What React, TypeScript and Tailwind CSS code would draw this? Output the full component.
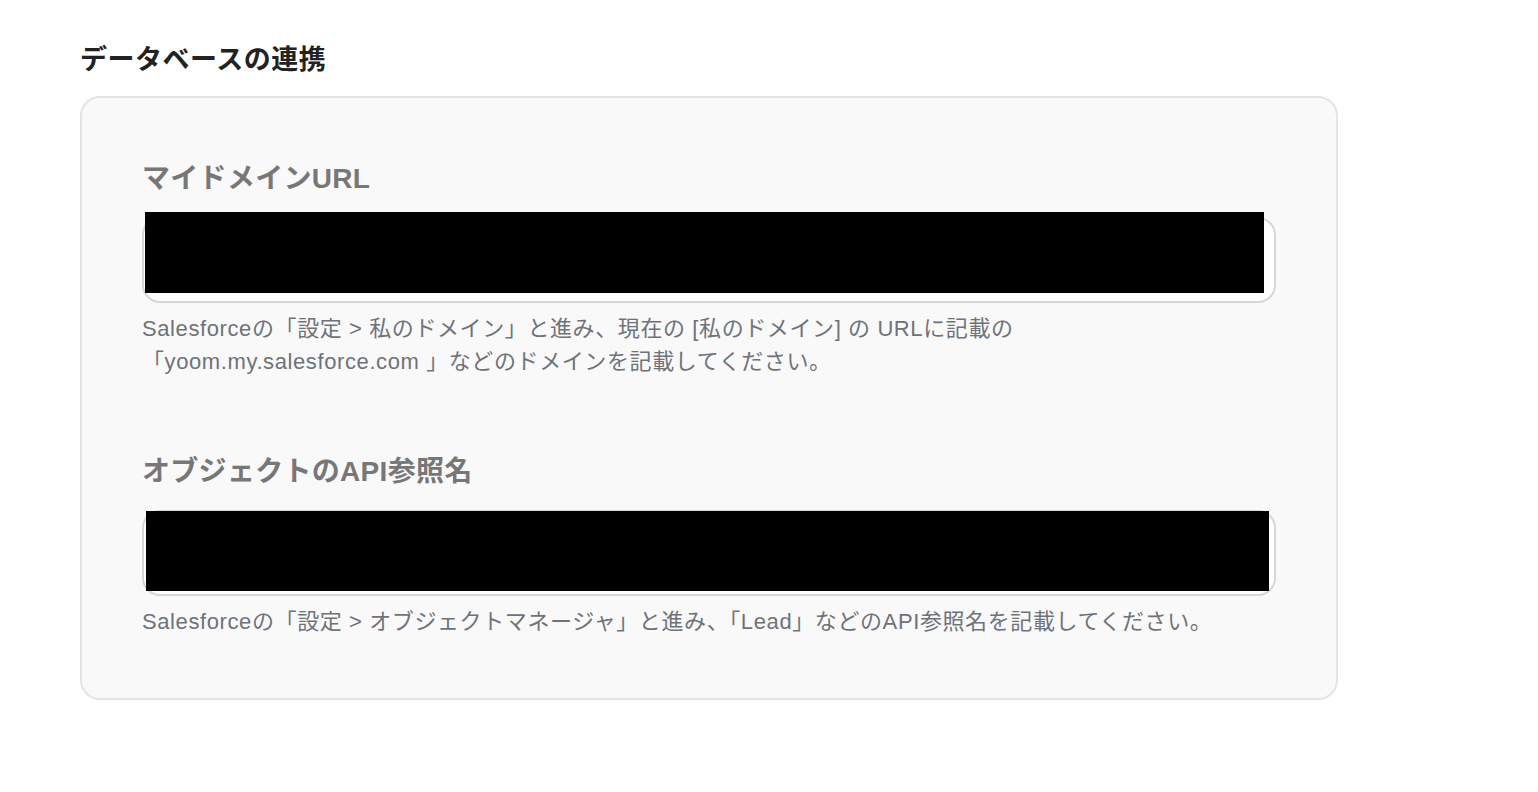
const latinJa = "font-['Liberation_Sans','Noto_Sans_CJK_JP',sans-serif]";

type FieldProps = {
  label: string;
  mask: string;
  help: React.ReactNode;
};

const Field = ({ label, mask, help }: FieldProps) => (
  <div className="flex flex-col">
    <h3 className="text-[28px] leading-[40px] font-bold text-[#777777] tracking-[0.3px]">{label}</h3>
    <div className="relative mt-[18px] h-[86px] rounded-[18px] border-2 border-[#d3d7dc] bg-white">
      {/* redaction block over the value */}
      <div className={`absolute bg-black ${mask}`}></div>
    </div>
    <p className="mt-[9px] text-[22px] leading-[33px] text-[#6e737a] tracking-[0.6px]">{help}</p>
  </div>
);

export default function App() {
  return (
    <div className={`min-h-screen bg-white pl-[80px] pt-[40px] ${latinJa}`}>
      <h2 className="text-[27px] leading-[40px] font-bold text-[#222222] tracking-[0.5px]">データベースの連携</h2>
      <div className="mt-[16px] w-[1258px] rounded-[20px] border-2 border-[#e1e4e8] bg-[#f9f9f9] px-[60px] pt-[61px] pb-[60px]">
        <Field
          label="マイドメインURL"
          mask="left-[1px] top-[-7px] w-[1119px] h-[81px]"
          help={
            <>
              Salesforceの「設定 &gt; 私のドメイン」と進み、現在の [私のドメイン] の URLに記載の
              <br />
              「yoom.my.salesforce.com 」などのドメインを記載してください。
            </>
          }
        />
        <div className="h-[74px]"></div>
        <Field
          label="オブジェクトのAPI参照名"
          mask="left-[2px] top-[-1px] w-[1123px] h-[80px]"
          help="Salesforceの「設定 > オブジェクトマネージャ」と進み、「Lead」などのAPI参照名を記載してください。"
        />
      </div>
    </div>
  );
}
